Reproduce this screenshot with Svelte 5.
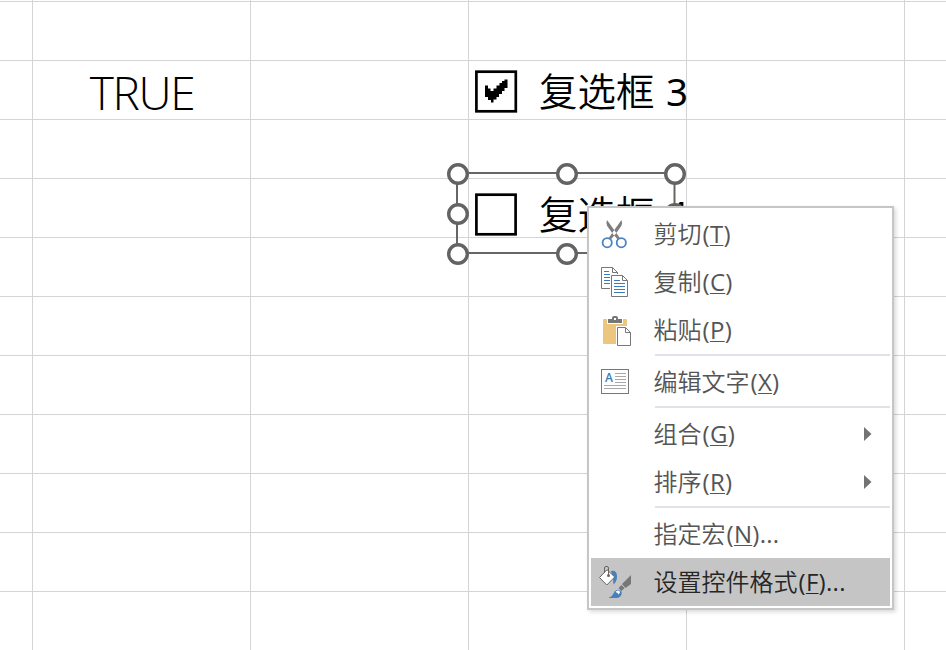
<script>
  const columns = [0, 1, 2, 3, 4, 5];
  const rows = Array.from({ length: 12 }, (_, i) => i);
  const groups = [
    [
      { icon: 'cut', label: '剪切', key: 'T' },
      { icon: 'copy', label: '复制', key: 'C' },
      { icon: 'paste', label: '粘贴', key: 'P' }
    ],
    [{ icon: 'text', label: '编辑文字', key: 'X' }],
    [
      { label: '组合', key: 'G', submenu: true },
      { label: '排序', key: 'R', submenu: true }
    ],
    [
      { label: '指定宏', key: 'N', dots: true },
      { icon: 'format', label: '设置控件格式', key: 'F', dots: true, active: true }
    ]
  ];
  const handles = [
    [11, 11], [120, 11], [228, 11],
    [11, 51], [228, 51],
    [11, 91], [120, 91], [228, 91]
  ];
</script>

<main class="sheet">
  <div class="cells">
    {#each rows as row}
      {#each columns as col}
        <div class="cell">{#if row === 2 && col === 1}<span class="value">TRUE</span>{/if}</div>
      {/each}
    {/each}
  </div>

  <div class="control first">
    <svg class="box" width="43" height="43" viewBox="0 0 43 43">
      <rect x="1.4" y="1.7" width="39.4" height="39.6" fill="#fff" stroke="#000" stroke-width="2.7" />
      <path d="M10 15.500h3v3h2.500v2.500h3v-2.500h3v-3h3v-2.500h2.500v-2h2.500v-1.500h3v8.500h-3v3h-2.500v3h-3v3h-2.500v2.500h-3v3h-2.500v-2.500h-3v-3h-3z" fill="#000" />
    </svg>
    <span class="caption">复选框<span class="num">3</span></span>
  </div>

  <div class="control second">
    <svg class="box" width="43" height="43" viewBox="0 0 43 43">
      <rect x="1.4" y="1.7" width="39.2" height="39.6" fill="#fff" stroke="#000" stroke-width="2.7" />
    </svg>
    <span class="caption">复选框<span class="num">4</span></span>
  </div>

  <svg class="selection" width="240" height="104" viewBox="0 0 240 104">
    <rect x="10" y="10" width="217.500" height="80" fill="none" stroke="#666" stroke-width="2" />
    {#each handles as [x, y]}
      <circle cx={x} cy={y} r="9.3" fill="#fff" stroke="#636363" stroke-width="3.4" />
    {/each}
  </svg>

  <div class="menu" role="menu">
    {#each groups as group, g}
      {#if g > 0}<div class="separator"></div>{/if}
      {#each group as item}
        <div class="item" class:active={item.active} role="menuitem" tabindex="-1">
          <span class="icon">
            {#if item.icon}
              <svg width="36" height="36" viewBox="0 0 36 36" fill="none">
                {#if item.icon === 'cut'}
                  <path d="M10 4L19 16.500l3.800 5.500-2.300 1.200-4.800-5.400L10.200 10Q8.700 7 10 4zM24.500 4L15.500 16.500l-3.800 5.500 2.300 1.200 4.800-5.400L24.300 10Q25.800 7 24.500 4z" fill="#7d7d7d" />
                  <circle cx="10.2" cy="26.7" r="4.600" stroke="#4b83bd" stroke-width="1.800" />
                  <circle cx="24.3" cy="26.7" r="4.600" stroke="#4b83bd" stroke-width="1.800" />
                {:else if item.icon === 'copy'}
                  <path d="M4.5 3.5h11l5 5v16h-16z" fill="#fff" stroke="#777" />
                  <path d="M15.5 3.5v5h5" stroke="#777" />
                  <path d="M7 7.5h5M7 10.5h6M7 13.5h6M7 16.5h6M7 19.5h6" stroke="#3e7bbb" />
                  <path d="M13 10h13l6 6v17H13z" fill="#fff" />
                  <path d="M14.5 11.5h11l5 5v16h-16z" fill="#fff" stroke="#777" />
                  <path d="M25.5 11.5v5h5" stroke="#777" />
                  <path d="M17 16.5h6M17 19.5h11M17 22.5h11M17 25.5h11M17 28.5h11" stroke="#3e7bbb" />
                {:else if item.icon === 'paste'}
                  <rect x="6" y="7" width="24" height="25" rx="1" fill="#ecc67c" />
                  <path d="M10 6h16v6H10z" fill="#fff" />
                  <path d="M11 11V7h4V6q0-2 2-2h2q2 0 2 2v1h4v4z" fill="#777" />
                  <path d="M17 6h2v2h-2z" fill="#fff" />
                  <path d="M19 14h11l5 5v16H19z" fill="#fff" />
                  <path d="M20.5 15.5h8l5 5v13h-13z" fill="#fff" stroke="#777" />
                  <path d="M28.5 15.5v5h5" stroke="#777" />
                {:else if item.icon === 'text'}
                  <rect x="4.5" y="5.5" width="27" height="24" fill="#fff" stroke="#777" />
                  <text x="8" y="18" fill="#3e7bbb" font-size="12" font-weight="600" font-family="Open Sans, sans-serif">A</text>
                  <path d="M18 9.5h11M18 12.5h11M18 15.5h11M18 18.5h11M7 21.5h22M7 24.5h22" stroke="#a8a8a8" />
                {:else}
                  <path d="M14 7q6-1 6 5.500 0 5-3.500 8l-.5-7z" fill="#4580bc" />
                  <path d="M2.500 13.500L10 5.700l7.700 7.300-7.900 8z" fill="#fff" stroke="#666" />
                  <path d="M7.500 9V4Q7.500 2.500 9 2.500h1q1.500 0 1.500 1.500v7" stroke="#666" />
                  <circle cx="11.500" cy="11.500" r="1.500" fill="#666" />
                  <path d="M34 11v9l-5.500 4-3.500-4zM24.500 21l3 3-3 3-3-3z" fill="#777" />
                  <path d="M11.500 34q3.500-1 5-4.500 2-4.500 6-3.500 3 1 2 4.500-1.500 3.500-5 3.500z" fill="#4580bc" />
                  <path d="M18.500 28q2-2 4-1.200 1.300 1.700-.8 3.700-.700-2-3.200-2.500z" fill="#fff" />
                {/if}
              </svg>
            {/if}
          </span>
          <span class="label">{item.label}<span class="key">(<u>{item.key}</u>){item.dots ? '...' : ''}</span></span>
          {#if item.submenu}
            <svg class="arrow" width="8" height="14" viewBox="0 0 8 14"><path d="M0 0l7.500 7L0 14z" fill="#737373" /></svg>
          {/if}
        </div>
      {/each}
    {/each}
  </div>
</main>

<style>
  .sheet {
    position: relative;
    width: 946px;
    height: 650px;
    overflow: hidden;
    background: #fff;
    font-family: "Open Sans", "Noto Sans CJK SC", sans-serif;
    color: #000;
  }
  .cells {
    display: grid;
    grid-template-columns: 33px repeat(5, 218px);
    grid-template-rows: 2px repeat(11, 59px);
  }
  .cell {
    box-sizing: border-box;
    display: flex;
    align-items: center;
    justify-content: center;
    border-right: 1px solid #d4d4d4;
    border-bottom: 1px solid #d4d4d4;
  }
  .value {
    font-size: 46px;
    font-weight: 350;
    letter-spacing: -1.4px;
    line-height: 56px;
    padding: 3px 0 0 1px;
  }
  .control {
    position: absolute;
    left: 475px;
    display: flex;
    align-items: center;
    height: 43px;
  }
  .first { top: 70px; }
  .second { top: 193px; }
  .box { flex: none; }
  .caption {
    margin-left: 21px;
    font-size: 38.500px;
    line-height: 43px;
    font-weight: 350;
    white-space: nowrap;
  }
  .num {
    margin-left: 11.500px;
    font-family: "Noto Sans", sans-serif;
    font-weight: 400;
  }
  .selection {
    position: absolute;
    left: 447px;
    top: 163px;
  }
  .menu {
    position: absolute;
    left: 587px;
    top: 206px;
    width: 307px;
    height: 404px;
    box-sizing: border-box;
    padding: 2px;
    border: 2px solid #c6c6c6;
    background: #fff;
    box-shadow: 2px 2px 4px rgba(0, 0, 0, 0.15);
    color: #555;
  }
  .item {
    display: flex;
    align-items: center;
    height: 48px;
    padding-right: 18px;
  }
  .active {
    background: #c5c5c5;
    color: #262626;
  }
  .icon {
    width: 36px;
    height: 36px;
    margin: 0 20.500px 0 6px;
    flex: none;
  }
  .icon svg { display: block; }
  .label {
    flex: 1;
    font-size: 24px;
    line-height: 48px;
    font-weight: 350;
    white-space: nowrap;
  }
  .key {
    margin-left: 1px;
    font-family: "Open Sans", sans-serif;
    font-weight: 390;
    letter-spacing: 0.300px;
  }
  u {
    text-decoration-thickness: 1px;
    text-underline-offset: 2px;
  }
  .separator {
    height: 2px;
    margin: 0 0 2px 64px;
    background: #dfe3e7;
  }
</style>
